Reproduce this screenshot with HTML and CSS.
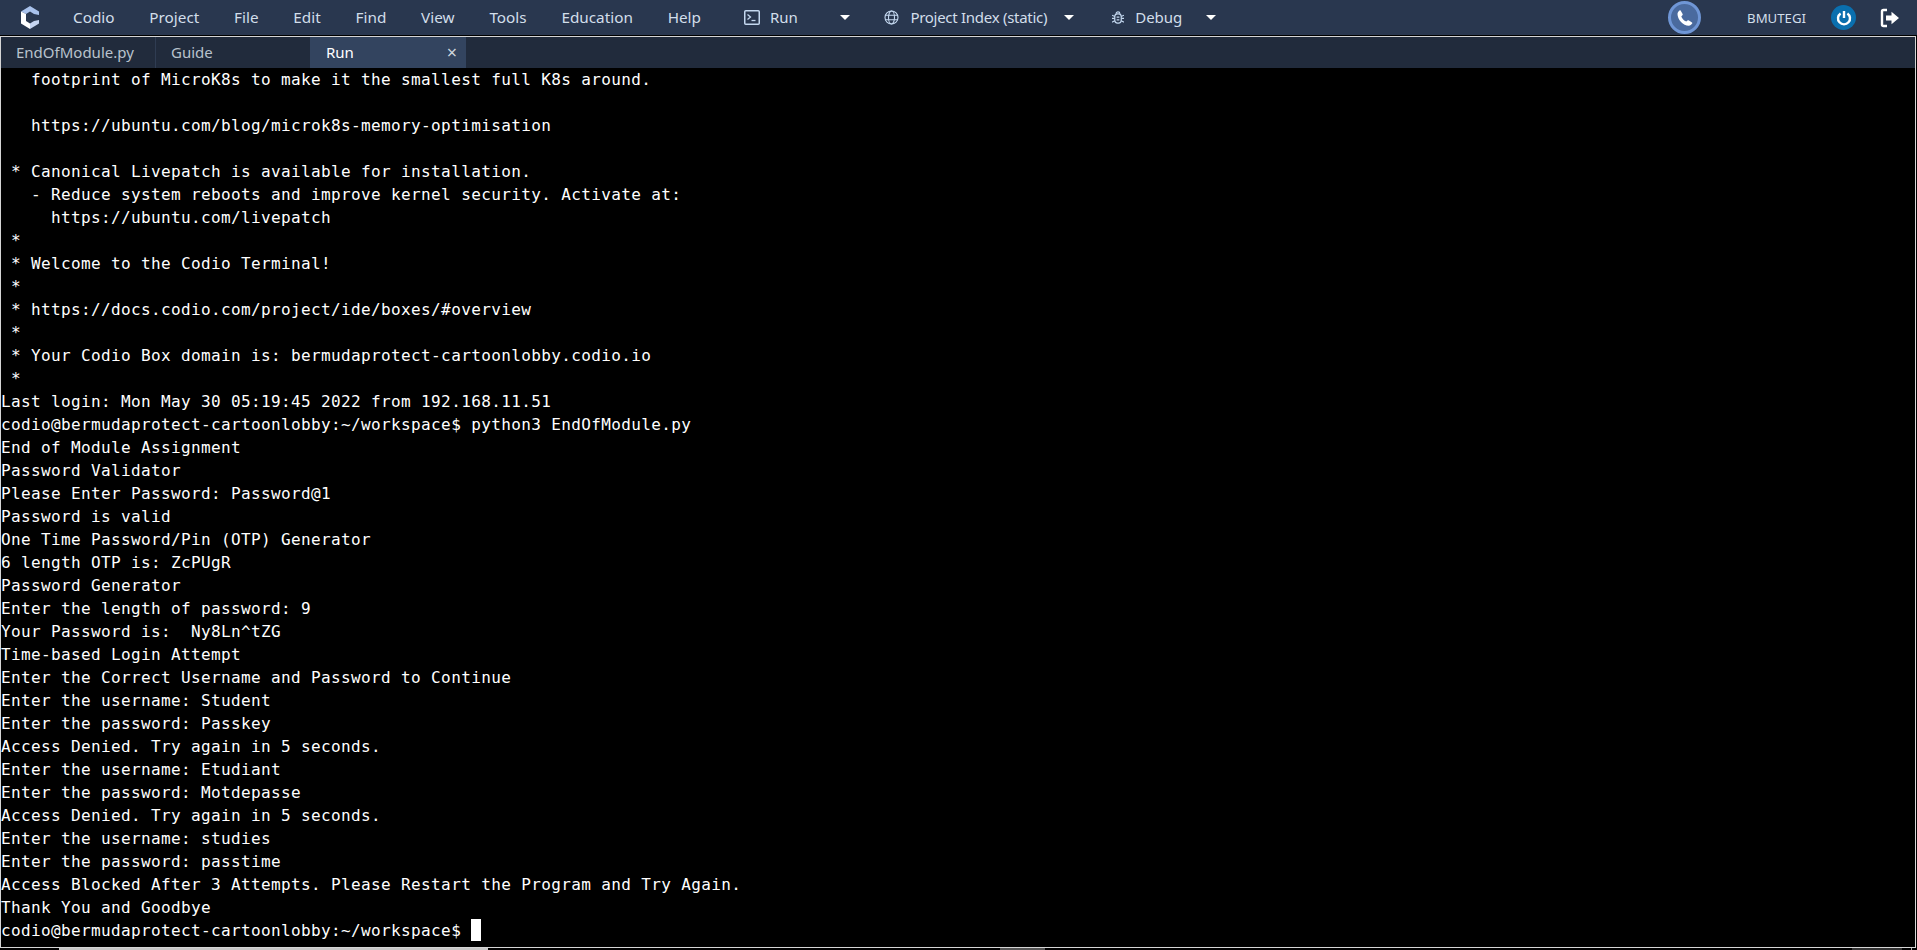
FILE: index.html
```html
<!DOCTYPE html>
<html lang="en">
<head>
<meta charset="utf-8">
<title>Codio</title>
<link rel="stylesheet" href="styles.css">
</head>
<body>
<header class="topbar">
  <svg class="logo" viewBox="0 0 18 23" width="18" height="23"><path fill="#a9c2ec" d="M9 0l9 5.500V9l-5-1-4-2.500L5 8 0 5.500z"/><path fill="#fff" d="M0 5.500L5 8v7l4 2.500V23l-9-5.500z"/><path fill="#c5d5f2" d="M9 17.500l4-2.500 5-1v3.500L9 23z"/></svg>
  <nav class="menu">
    <span>Codio</span>
    <span>Project</span>
    <span>File</span>
    <span>Edit</span>
    <span>Find</span>
    <span>View</span>
    <span>Tools</span>
    <span>Education</span>
    <span>Help</span>
  </nav>
  <div class="actions">
    <div class="action run">
      <svg width="16" height="15" viewBox="0 0 16 15"><rect x=".75" y=".75" width="14.5" height="13.5" rx="1" fill="none" stroke="#c4d8f0" stroke-width="1.5"/><path d="M3.500 4.500l3 2.500-3 2.500" fill="none" stroke="#c4d8f0" stroke-width="1.300"/><path d="M7.500 10.500h4" stroke="#c4d8f0" stroke-width="1.300"/></svg>
      <span class="action-label">Run</span><span class="caret"></span>
    </div>
    <div class="action index">
      <svg width="15" height="15" viewBox="0 0 15 15" fill="none" stroke="#c4d8f0" stroke-width="1.100"><circle cx="7.500" cy="7.500" r="6.500"/><ellipse cx="7.500" cy="7.500" rx="3" ry="6.500"/><path d="M1 5.300h13M1 9.700h13"/></svg>
      <span class="action-label">Project Index (static)</span><span class="caret"></span>
    </div>
    <div class="action debug">
      <svg width="12" height="15" viewBox="0 0 13 15" fill="none" stroke="#c4d8f0" stroke-width="1.300"><rect x="3" y="3.500" width="7" height="10" rx="3"/><path d="M4.500 3.500a2 2 0 0 1 4 0M0 5l3 1.500M13 5l-3 1.500M0 8.500h3M13 8.500h-3M0 12.500l3-1.500M13 12.500l-3-1.500M5 7h3M5 10h3"/></svg>
      <span class="action-label">Debug</span><span class="caret"></span>
    </div>
  </div>
  <div class="right">
    <span class="phone"><svg width="16" height="16" viewBox="0 0 16 16"><path fill="#fff" d="M3.600.6l2 3.300c.3.5.2 1-.2 1.400L4.300 6.400c.8 2.200 2.600 4.200 5 5.200l1.200-1.100c.4-.4.9-.4 1.400-.1l3.100 2c.4.3.5.8.2 1.200-.8 1.200-2 2.200-3.400 2.200C6.200 15.800.5 9.500.5 3.900.5 2.500 1.400 1.300 2.500.5c.4-.3.9-.2 1.100.1z"/></svg></span>
    <span class="user">BMUTEGI</span>
    <span class="power"><svg width="16" height="16" viewBox="0 0 16 16" fill="none" stroke="#fff" stroke-width="2.400"><path d="M4.600 3.400a6 6 0 1 0 6.800 0"/><path d="M8 1v7"/></svg></span>
    <svg class="logout" width="19" height="20" viewBox="0 0 19 20"><path d="M7 2H3.500C2.400 2 2 2.600 2 3.500v13c0 .9.400 1.500 1.500 1.500H7" fill="none" stroke="#fff" stroke-width="2.400"/><path fill="#fff" d="M11.500 3.800L19 10l-7.500 6.200v-3.700H6v-5h5.500z"/></svg>
  </div>
</header>
<main class="window">
  <div class="tabs">
    <span class="tab tab-file">EndOfModule.py</span>
    <span class="tab tab-guide">Guide</span>
    <span class="tab tab-run"><span>Run</span><span class="close">×</span></span>
  </div>
<pre class="terminal">   footprint of MicroK8s to make it the smallest full K8s around.

   https://ubuntu.com/blog/microk8s-memory-optimisation

 * Canonical Livepatch is available for installation.
   - Reduce system reboots and improve kernel security. Activate at:
     https://ubuntu.com/livepatch
 *
 * Welcome to the Codio Terminal!
 *
 * https://docs.codio.com/project/ide/boxes/#overview
 *
 * Your Codio Box domain is: bermudaprotect-cartoonlobby.codio.io
 *
Last login: Mon May 30 05:19:45 2022 from 192.168.11.51
codio@bermudaprotect-cartoonlobby:~/workspace$ python3 EndOfModule.py
End of Module Assignment
Password Validator
Please Enter Password: Password@1
Password is valid
One Time Password/Pin (OTP) Generator
6 length OTP is: ZcPUgR
Password Generator
Enter the length of password: 9
Your Password is:  Ny8Ln^tZG
Time-based Login Attempt
Enter the Correct Username and Password to Continue
Enter the username: Student
Enter the password: Passkey
Access Denied. Try again in 5 seconds.
Enter the username: Etudiant
Enter the password: Motdepasse
Access Denied. Try again in 5 seconds.
Enter the username: studies
Enter the password: passtime
Access Blocked After 3 Attempts. Please Restart the Program and Try Again.
Thank You and Goodbye
codio@bermudaprotect-cartoonlobby:~/workspace$ <span class="cursor"></span></pre>
</main>
<div class="strip">
  <span class="seg seg-a"></span>
  <span class="seg seg-b"></span>
  <span class="seg seg-c"></span>
  <span class="seg seg-d"></span>
</div>
</body>
</html>
```
FILE: styles.css
```css
html, body {
  margin: 0;
  padding: 0;
  height: 950px;
  overflow: hidden;
  background: #000;
}
body {
  display: flex;
  flex-direction: column;
  font-family: "Noto Sans", "Open Sans", sans-serif;
}
.topbar {
  height: 35px;
  background: #29374f;
  display: flex;
  align-items: center;
  color: #d2deea;
  font-size: 15px;
  border-bottom: 1px solid #000;
  flex: none;
  padding: 0 18px 0 21px;
}
.logo { flex: none; }
.menu {
  display: flex;
  margin-left: 34px;
  gap: 34.8px;
  width: 671px;
  flex: none;
  font-size: 15.3px;
  padding-bottom: 2px;
}
.actions { display: flex; }
.action {
  display: flex;
  align-items: center;
}
.action svg { flex: none; }
.action-label { margin-left: 10px; padding-bottom: 2px; }
.caret {
  width: 0;
  height: 0;
  border-left: 5px solid transparent;
  border-right: 5px solid transparent;
  border-top: 5px solid #fff;
}
.run .caret { margin-left: 42.5px; }
.index { margin-left: 34px; }
.index .action-label { margin-left: 11px; letter-spacing: -0.28px; }
.index .caret { margin-left: 17px; }
.debug { margin-left: 38px; }
.debug .action-label { margin-left: 11px; }
.debug .caret { margin-left: 24px; }
.right {
  display: flex;
  align-items: center;
  margin-left: auto;
}
.phone {
  width: 33px;
  height: 33px;
  box-sizing: border-box;
  border-radius: 50%;
  background: #4a6a9e;
  border: 3px solid #6f96d6;
  display: flex;
  align-items: center;
  justify-content: center;
}
.user { font-size: 13.2px; margin-left: 46px; }
.power {
  width: 25px;
  height: 25px;
  border-radius: 50%;
  background: #0a6fae;
  margin-left: 25px;
  display: flex;
  align-items: center;
  justify-content: center;
}
.logout { margin-left: 24px; flex: none; }
.window {
  flex: 1;
  margin-right: 1px;
  border: 1px solid #d5d5d5;
  display: flex;
  flex-direction: column;
  min-height: 0;
}
.tabs {
  height: 31px;
  flex: none;
  background: #212b3c;
  display: flex;
  font-size: 15px;
  color: #b8c2cc;
}
.tab {
  display: flex;
  align-items: center;
  box-sizing: border-box;
  padding-bottom: 2px;
}
.tab-file { width: 155px; padding-left: 15px; border-right: 1px solid #2f3c52; }
.tab-guide { width: 154px; padding-left: 15px; }
.tab-run {
  width: 156px;
  padding: 0 9px 2px 16px;
  justify-content: space-between;
  background: #33445f;
  color: #fff;
}
.close { color: #cfd6de; font-size: 18px; }
.terminal {
  margin: 0;
  flex: 1;
  background: #000;
  color: #fff;
  font-family: "DejaVu Sans Mono", monospace;
  font-size: 16px;
  letter-spacing: 0.37px;
  line-height: 23px;
  overflow: hidden;
}
.cursor {
  display: inline-block;
  width: 10px;
  height: 22px;
  background: #fff;
  vertical-align: top;
}
.strip {
  height: 2px;
  flex: none;
  display: flex;
}
.seg { display: block; height: 2px; }
.seg-a { width: 429px; margin-left: 59px; background: #c8c8c8; }
.seg-b { width: 45px; margin-left: 512px; background: #555; }
.seg-c { width: 50px; margin-left: 807px; background: #333; }
.seg-d { width: 1px; margin-left: 9px; background: #aaa; }
```
